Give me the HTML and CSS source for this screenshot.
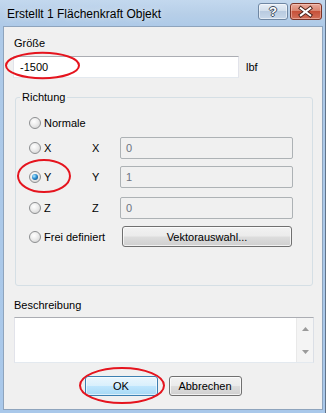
FILE: index.html
```html
<!DOCTYPE html>
<html lang="de">
<head>
<meta charset="utf-8">
<title>Erstellt 1 Flächenkraft Objekt</title>
<link rel="stylesheet" href="styles.css">
</head>
<body>
<div class="window">
  <div class="titlebar">
    <span class="title">Erstellt 1 Flächenkraft Objekt</span>
    <div class="caption-btns">
      <div class="cbtn help"><span>?</span></div>
      <div class="cbtn close">
        <svg width="32" height="17" viewBox="0 0 32 17">
          <path d="M10.5 5 L20.5 12.5 M20.5 5 L10.5 12.5" stroke="#4a2018" stroke-width="4.2" stroke-linecap="square" fill="none"/>
          <path d="M10.5 5 L20.5 12.5 M20.5 5 L10.5 12.5" stroke="#ffffff" stroke-width="2.2" stroke-linecap="square" fill="none"/>
        </svg>
      </div>
    </div>
  </div>
  <div class="client">
    <div class="lbl">Größe</div>
    <div class="valrow">
      <div class="tb main">-1500</div>
      <span class="unit">lbf</span>
    </div>
    <fieldset class="group">
      <legend>Richtung</legend>
      <div class="row r1">
        <div class="opt"><span class="radio"></span>Normale</div>
      </div>
      <div class="row r2">
        <div class="opt"><span class="radio"></span>X</div>
        <span class="axis">X</span>
        <div class="tb dis">0</div>
      </div>
      <div class="row r3">
        <div class="opt"><span class="radio on"></span>Y</div>
        <span class="axis">Y</span>
        <div class="tb dis">1</div>
      </div>
      <div class="row r4">
        <div class="opt"><span class="radio"></span>Z</div>
        <span class="axis">Z</span>
        <div class="tb dis">0</div>
      </div>
      <div class="row r5">
        <div class="opt wide"><span class="radio"></span>Frei definiert</div>
        <button class="btn vec">Vektorauswahl...</button>
      </div>
    </fieldset>
    <div class="lbl desc">Beschreibung</div>
    <div class="memo">
      <div class="sb">
        <svg width="7" height="4" viewBox="0 0 7 4"><path d="M0 4 L3.5 0 L7 4 Z" fill="#9a9a9a"/></svg>
        <svg width="7" height="4" viewBox="0 0 7 4"><path d="M0 0 L3.5 4 L7 0 Z" fill="#9a9a9a"/></svg>
      </div>
    </div>
    <div class="btnrow">
      <button class="btn ok">OK</button>
      <button class="btn">Abbrechen</button>
    </div>
  </div>
  <svg class="marks" width="327" height="413" viewBox="0 0 327 413">
    <ellipse cx="42.5" cy="65.5" rx="36.5" ry="12.8" />
    <ellipse cx="44" cy="176" rx="26" ry="16" />
    <ellipse cx="122" cy="385.5" rx="42" ry="17.5" />
  </svg>
</div>
</body>
</html>
```

FILE: styles.css
```css
html, body {
  margin: 0;
  padding: 0;
}
body {
  background: #ffffff;
  font-family: "Liberation Sans", Arial, sans-serif;
  font-size: 11px;
  color: #000;
}
.window {
  position: relative;
  width: 326px;
  height: 413px;
  box-sizing: border-box;
  display: flex;
  flex-direction: column;
  padding: 0 2px 3px 3px;
  border-right: 1px solid #60738a;
  background: linear-gradient(180deg, #c3d8ee 0px, #b7cfe8 14px, #aecae8 26px, #a9c8ea 100%);
}
.titlebar {
  flex: none;
  height: 26px;
  display: flex;
  align-items: flex-start;
}
.title {
  margin: 6px 0 0 4px;
  font-size: 12px;
  line-height: 16px;
  color: #000;
  text-shadow: 0 0 6px rgba(255,255,255,0.7);
}
.caption-btns {
  margin-left: auto;
  margin-right: 1px;
  margin-top: 3px;
  display: flex;
  gap: 2px;
}
.cbtn {
  height: 17px;
  box-sizing: border-box;
  border-radius: 3px;
  display: flex;
  align-items: center;
  justify-content: center;
}
.help {
  width: 30px;
  border: 1px solid #6f87a3;
  background: linear-gradient(180deg, #e6eef7 0%, #d3dfec 45%, #b9cbe0 50%, #c8d8ea 100%);
  box-shadow: inset 0 0 0 1px rgba(255,255,255,0.5);
}
.help span {
  font-family: "Liberation Sans", Arial, sans-serif;
  font-weight: bold;
  font-size: 13px;
  line-height: 15px;
  color: #fff;
  text-shadow: -1px 0 0 #3d4a5c, 1px 0 0 #3d4a5c, 0 -1px 0 #3d4a5c, 0 1px 0 #3d4a5c;
}
.close {
  width: 32px;
  border: 1px solid #7b3326;
  background: linear-gradient(180deg, #e9a99a 0%, #d98571 45%, #c75139 50%, #d2705a 100%);
  box-shadow: inset 0 0 0 1px rgba(255,220,210,0.45);
}
.close svg {
  display: block;
}
.client {
  flex: 1;
  background: #f0f0f0;
  border: 1px solid #8ea4bd;
  display: flex;
  flex-direction: column;
  padding: 10px 8px 0 8px;
  min-height: 0;
}
.lbl {
  line-height: 13px;
  margin-left: 2px;
}
.valrow {
  display: flex;
  align-items: center;
  margin-top: 6px;
}
.tb {
  box-sizing: border-box;
  height: 22px;
  display: flex;
  align-items: center;
}
.tb.main {
  width: 226px;
  margin-left: 1px;
  padding-left: 6px;
  background: #fff;
  border: 1px solid;
  border-color: #abadb3 #e2e3ea #e3e9ef #e2e3ea;
}
.unit {
  margin-left: 7px;
}
.group {
  margin: 13px 0 0 3px;
  width: 298px;
  box-sizing: border-box;
  border: 1px solid #d5dfe5;
  border-radius: 3px;
  padding: 0 0 38px 13px;
  min-width: 0;
}
.group legend {
  padding: 0 2px;
  margin-left: -9px;
  line-height: 13px;
}
.row {
  display: flex;
  align-items: center;
  height: 22px;
}
.r1 { margin-top: 8px; }
.r2 { margin-top: 3px; }
.r3 { margin-top: 7px; }
.r4 { margin-top: 9px; }
.r5 { margin-top: 7px; height: 21px; }
.opt {
  width: 63px;
  display: flex;
  align-items: center;
}
.opt.wide {
  width: 92px;
}
.radio {
  flex: none;
  width: 12px;
  height: 12px;
  box-sizing: border-box;
  border-radius: 50%;
  border: 1px solid #8d8f91;
  background: radial-gradient(circle at 40% 35%, #ffffff 0%, #ececec 45%, #cdcdcd 100%);
  margin-right: 3px;
  display: flex;
  align-items: center;
  justify-content: center;
}
.radio.on::after {
  content: "";
  width: 6px;
  height: 6px;
  border-radius: 50%;
  background: radial-gradient(circle at 35% 35%, #b5ecff 0%, #2b8fd4 45%, #0a3b62 100%);
}
.axis {
  width: 28px;
}
.tb.dis {
  width: 173px;
  padding-left: 5px;
  border: 1px solid #adb2b5;
  border-radius: 2px;
  background: #f0f0f0;
  color: #6d7380;
}
.btn {
  box-sizing: border-box;
  height: 20px;
  padding: 0;
  font-family: "Liberation Sans", Arial, sans-serif;
  font-size: 11px;
  color: #000;
  border: 1px solid #707070;
  border-radius: 3px;
  background: linear-gradient(180deg, #f2f2f2 0%, #ebebeb 48%, #dddddd 52%, #cfcfcf 100%);
  box-shadow: inset 0 0 0 1px rgba(255,255,255,0.7);
}
.vec {
  width: 170px;
  height: 21px;
  margin-left: 1px;
}
.desc {
  margin-top: 13px;
}
.memo {
  margin: 5px 0 0 2px;
  width: 300px;
  height: 46px;
  box-sizing: border-box;
  background: #fff;
  border: 1px solid;
  border-color: #abadb3 #dbdfe6 #e3e9ef #e2e3ea;
  display: flex;
  justify-content: flex-end;
}
.sb {
  width: 17px;
  box-sizing: border-box;
  background: #f4f4f4;
  border-left: 1px solid #e9e9e9;
  display: flex;
  flex-direction: column;
  align-items: center;
  justify-content: space-between;
  padding: 9px 0 8px;
}
.sb svg {
  display: block;
}
.btnrow {
  margin-top: 13px;
  display: flex;
  justify-content: center;
  gap: 11px;
}
.btnrow .btn {
  width: 73px;
}
.btn.ok {
  border-color: #3c7fb1;
  background: linear-gradient(180deg, #eaf6fd 0%, #d9f0fc 48%, #bee6fd 52%, #a7d9f5 100%);
  box-shadow: inset 0 0 0 1px rgba(255,255,255,0.6);
}
.marks {
  position: absolute;
  left: 0;
  top: 0;
  pointer-events: none;
}
.marks ellipse {
  fill: none;
  stroke: #e5141e;
  stroke-width: 2;
}
```
